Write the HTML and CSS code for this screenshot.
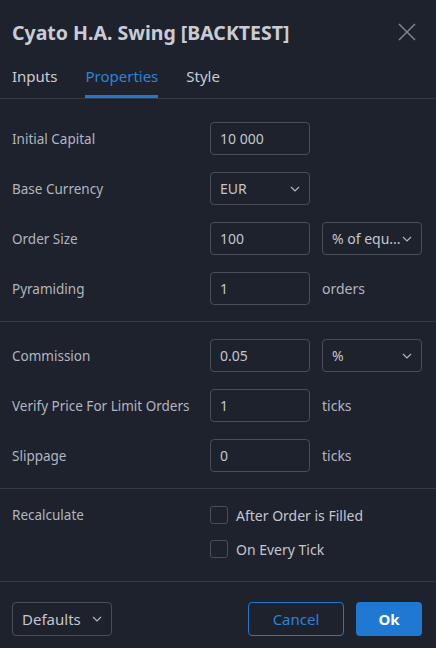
FILE: index.html
```html
<!DOCTYPE html>
<html lang="en">
<head>
  <meta charset="UTF-8" />
  <title>Cyato H.A. Swing [BACKTEST]</title>
  <link rel="stylesheet" href="styles.css">
</head>
<body>
  <div class="dialog">
    <div class="head">
      <h1>Cyato H.A. Swing [BACKTEST]</h1>
      <svg class="close" width="18" height="18" viewBox="0 0 18 18"><path d="M1 1L17 17M17 1L1 17" stroke="#868993" stroke-width="1.4" fill="none"/></svg>
    </div>
    <div class="tabs">
      <span class="tab">Inputs</span>
      <span class="tab active">Properties</span>
      <span class="tab">Style</span>
    </div>

    <!-- capital -->
    <div class="section first">
      <div class="row">
        <span class="label">Initial Capital</span>
        <div class="field">10 000</div>
      </div>
      <div class="row">
        <span class="label">Base Currency</span>
        <div class="field select">EUR <svg width="10" height="6" viewBox="0 0 10 6"><path d="M1 1l4 4 4-4" stroke="#b2b5be" stroke-width="1.2" fill="none"/></svg></div>
      </div>
      <div class="row">
        <span class="label">Order Size</span>
        <div class="field">100</div>
        <div class="field select">% of equ... <svg width="10" height="6" viewBox="0 0 10 6"><path d="M1 1l4 4 4-4" stroke="#b2b5be" stroke-width="1.2" fill="none"/></svg></div>
      </div>
      <div class="row">
        <span class="label">Pyramiding</span>
        <div class="field">1</div>
        <span class="unit">orders</span>
      </div>
    </div>

    <!-- costs -->
    <div class="section">
      <div class="row">
        <span class="label">Commission</span>
        <div class="field">0.05</div>
        <div class="field select">% <svg width="10" height="6" viewBox="0 0 10 6"><path d="M1 1l4 4 4-4" stroke="#b2b5be" stroke-width="1.2" fill="none"/></svg></div>
      </div>
      <div class="row">
        <span class="label">Verify Price For Limit Orders</span>
        <div class="field">1</div>
        <span class="unit">ticks</span>
      </div>
      <div class="row">
        <span class="label">Slippage</span>
        <div class="field">0</div>
        <span class="unit">ticks</span>
      </div>
    </div>

    <!-- recalc -->
    <div class="section recalc">
      <span class="label">Recalculate</span>
      <div class="checks">
        <label class="check"><span class="box"></span>After Order is Filled</label>
        <label class="check"><span class="box"></span>On Every Tick</label>
      </div>
    </div>

    <div class="footer">
      <div class="btn defaults">Defaults <svg width="10" height="6" viewBox="0 0 10 6"><path d="M1 1l4 4 4-4" stroke="#b2b5be" stroke-width="1.2" fill="none"/></svg></div>
      <div class="btn cancel">Cancel</div>
      <div class="btn ok">Ok</div>
    </div>
  </div>
</body>
</html>
```

FILE: styles.css
```css
body {
  margin: 0;
  background-color: #1e222d;
  font-family: "Noto Sans", sans-serif;
  color: #b2b5be;
}
.dialog {
  width: 436px;
}
.head {
  display: flex;
  align-items: center;
  justify-content: space-between;
  height: 64px;
  padding: 0 20px 0 12px;
}
h1 {
  margin: 0;
  font-size: 19.5px;
  font-weight: bold;
  color: #c9ccd4;
}
.tabs {
  display: flex;
  gap: 28px;
  padding: 0 12px;
  height: 34px;
  border-bottom: 1px solid #363a45;
}
.tab {
  font-size: 15px;
  color: #c9ccd4;
  line-height: 24px;
  box-sizing: border-box;
}
.tab.active {
  color: #2f82d6;
  border-bottom: 3px solid #1f78d1;
}
.section {
  padding: 17px 14px 16px 12px;
  border-bottom: 1px solid #363a45;
  display: flex;
  flex-direction: column;
  gap: 17px;
}
.section.first {
  padding-top: 23px;
}
.row {
  display: flex;
  align-items: center;
  height: 33px;
}
.label {
  width: 198px;
  flex-shrink: 0;
  font-size: 13.5px;
}
.field {
  width: 100px;
  height: 33px;
  box-sizing: border-box;
  border: 1px solid #4a4e59;
  border-radius: 4px;
  padding: 0 9px;
  font-size: 14px;
  display: flex;
  align-items: center;
  justify-content: space-between;
  color: #c3c6ce;
}
.field + .field {
  margin-left: 12px;
}
.unit {
  margin-left: 12px;
  font-size: 14px;
}
.recalc {
  flex-direction: row;
  gap: 0;
  padding-bottom: 23px;
}
.recalc .label {
  line-height: 18px;
}
.checks {
  display: flex;
  flex-direction: column;
  gap: 16px;
}
.check {
  display: flex;
  align-items: center;
  gap: 8px;
  font-size: 14px;
  height: 18px;
  color: #c3c6ce;
}
.box {
  width: 18px;
  height: 18px;
  box-sizing: border-box;
  border: 1px solid #4a4e59;
  border-radius: 3px;
}
.footer {
  display: flex;
  align-items: center;
  gap: 12px;
  padding: 20px 14px 0 12px;
}
.btn {
  height: 34px;
  box-sizing: border-box;
  border-radius: 4px;
  font-size: 15px;
  display: flex;
  align-items: center;
  justify-content: center;
}
.defaults {
  width: 100px;
  border: 1px solid #4a4e59;
  justify-content: space-between;
  padding: 0 9px 0 9px;
  color: #c3c6ce;
  margin-right: auto;
}
.cancel {
  width: 96px;
  border: 1px solid #1f78d1;
  color: #2f82d6;
}
.ok {
  width: 66px;
  background-color: #1f78d1;
  color: #ffffff;
  font-weight: bold;
}
```
